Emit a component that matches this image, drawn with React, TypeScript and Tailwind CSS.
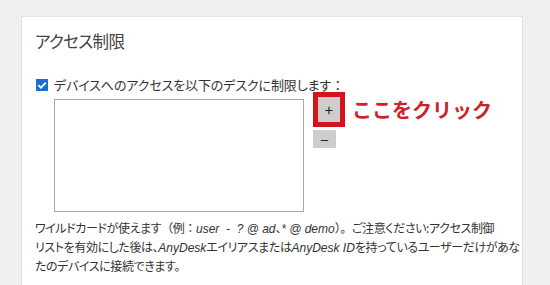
const jp = "[font-family:'Noto_Sans_CJK_JP','Noto_Sans',sans-serif]";
const latin = "[font-family:'Liberation_Sans','Noto_Sans_CJK_JP',sans-serif] italic tracking-normal";
const full = "[font-feature-settings:normal]";

function CheckIcon() {
  return (
    <svg width="12" height="12" viewBox="0 0 12 12" className="shrink-0">
      <rect x="0" y="0" width="12" height="12" fill="#1a6fd0" />
      <path d="M2.3 6.2 L4.9 8.7 L9.8 3.6" stroke="#fff" strokeWidth="1.8" fill="none" />
    </svg>
  );
}

export default function App() {
  return (
    <div className={`w-[550px] h-[285px] overflow-hidden bg-[#f0f0f0] pt-[16px] pl-[21px] ${jp}`}>
      <div className="w-[502px] h-[300px] bg-white border border-[#e3e3e3] pl-[13px] pt-[12px]">
        <h2 className="text-[16.5px] leading-[24px] text-[#444] tracking-[-0.6px] [font-feature-settings:'palt']">
          アクセス制限
        </h2>

        <div className="mt-[23px] flex items-center gap-[6px] pl-[1px] h-[18px]">
          <CheckIcon />
          <span className="text-[13px] text-[#333] tracking-[-0.1px] [font-feature-settings:'palt']">
            デバイスへのアクセスを以下のデスクに制限します<span className={full}>：</span>
          </span>
        </div>

        <div className="flex items-start ml-[19px] mt-[4px]">
          <div className="w-[250px] h-[113px] border border-[#a8a8a8] bg-white mt-[1px]" />
          <div className="ml-[9px] -mt-[6px] flex flex-col">
            <div className="flex items-center">
              <div className="border-[5px] border-[#d3141d]">
                <div className="w-[22px] h-[25px] bg-[#cdcdcd] flex items-center justify-center text-[15px] text-[#222] leading-none">
                  +
                </div>
              </div>
              <span className="ml-[7px] text-[20px] font-bold text-[#d01f29] leading-none">
                ここをクリック
              </span>
            </div>
            <div className="mt-[3px] w-[23px] h-[18px] bg-[#cdcdcd] flex items-center justify-center text-[15px] text-[#222] leading-none">
              −
            </div>
          </div>
        </div>

        <p className="mt-[7px] text-[12px] leading-[17px] text-[#333] tracking-[-0.4px] whitespace-pre [font-feature-settings:'palt']">
          ワイルドカードが使えます<span className={full}>（例：</span>
          <span className={latin}>user  -  ? @ ad</span>、<span className={latin}>* @ demo</span>
          <span className={full}>）。</span>ご注意ください:アクセス制御
          <br />
          リストを有効にした後は、<span className={latin}>AnyDesk</span>エイリアスまたは<span className={latin}>AnyDesk ID</span>を持っているユーザーだけがあな
          <br />
          たのデバイスに接続できます。
        </p>
      </div>
    </div>
  );
}
